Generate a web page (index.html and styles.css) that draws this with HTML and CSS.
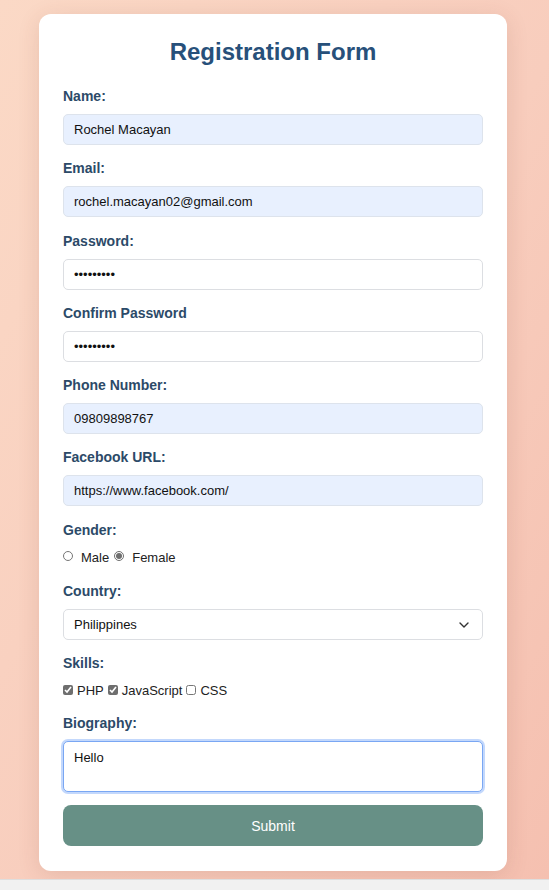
FILE: index.html
```html
<!DOCTYPE html>
<html lang="en">
<head>
<meta charset="utf-8">
<title>Registration Form</title>
<link rel="stylesheet" href="styles.css">
</head>
<body>
<form class="card">
  <h2 class="title">Registration Form</h2>

  <label class="lbl" for="name">Name:</label>
  <input class="field filled" id="name" type="text" value="Rochel Macayan">

  <label class="lbl" for="email">Email:</label>
  <input class="field filled" id="email" type="email" value="rochel.macayan02@gmail.com">

  <label class="lbl" for="pw">Password:</label>
  <input class="field" id="pw" type="password" value="123456789">

  <label class="lbl" for="pw2">Confirm Password</label>
  <input class="field" id="pw2" type="password" value="123456789">

  <label class="lbl" for="phone">Phone Number:</label>
  <input class="field filled" id="phone" type="text" value="09809898767">

  <label class="lbl" for="fb">Facebook URL:</label>
  <input class="field filled" id="fb" type="text" value="https://www.facebook.com/">

  <label class="lbl">Gender:</label>
  <div class="choices gender">
    <input class="radio" type="radio" name="g" id="male"><label class="opt" for="male">Male</label>
    <input class="radio" type="radio" name="g" id="female" checked><label class="opt" for="female">Female</label>
  </div>

  <label class="lbl" for="country">Country:</label>
  <div class="select-wrap">
    <select class="field select" id="country">
      <option>Philippines</option>
    </select>
    <svg class="chev" width="10" height="6" viewBox="0 0 10 6"><path d="M1 1 L5 5 L9 1" fill="none" stroke="#333" stroke-width="1.4" stroke-linecap="round" stroke-linejoin="round"/></svg>
  </div>

  <label class="lbl">Skills:</label>
  <div class="choices skills">
    <input class="check" type="checkbox" id="php" checked><label class="opt" for="php">PHP</label>
    <input class="check" type="checkbox" id="js" checked><label class="opt" for="js">JavaScript</label>
    <input class="check" type="checkbox" id="css"><label class="opt" for="css">CSS</label>
  </div>

  <label class="lbl" for="bio">Biography:</label>
  <textarea class="field bio" id="bio">Hello</textarea>

  <button class="submit" type="button">Submit</button>
</form>
</body>
</html>
```

FILE: styles.css
```css
html {
  background: #f1f1f1;
  margin: 0;
  height: 100%;
}

body {
  margin: 0;
  padding: 14px 3px 8px 0;
  background: linear-gradient(120deg, #fbd9c6 0%, #f8cdbd 55%, #f5c0b0 100%);
  border-bottom: 1px solid #dedede;
  display: flex;
  justify-content: center;
  font-family: "Liberation Sans", Arial, sans-serif;
}

.card {
  width: 468px;
  box-sizing: border-box;
  background: #fff;
  border-radius: 12px;
  padding: 24px 24px 25px;
  display: flex;
  flex-direction: column;
  box-shadow: 0 4px 22px rgba(120, 60, 40, 0.14);
}

.title {
  margin: 0 0 22px;
  font-size: 24px;
  line-height: 28px;
  text-align: center;
  color: #27507a;
  font-weight: bold;
}

.lbl {
  font-size: 14px;
  line-height: 16px;
  font-weight: bold;
  color: #2c4a68;
  margin-bottom: 10px;
}

.field {
  box-sizing: border-box;
  width: 100%;
  height: 31px;
  margin: 0 0 15.3px;
  padding: 0 10px;
  border: 1px solid #dcdee2;
  border-radius: 5px;
  background: #fff;
  font-family: "Liberation Sans", Arial, sans-serif;
  font-size: 13px;
  color: #111;
  outline: none;
}

.field.filled {
  background: #e8f0fe;
  border-color: #dde3ec;
}

.choices {
  display: flex;
  align-items: center;
  height: 17px;
  font-size: 13px;
  color: #222;
}

.gender {
  margin-bottom: 18px;
}

.skills {
  margin-bottom: 17px;
}

.radio {
  width: 10px;
  height: 10px;
  margin: 0 8px 0 0;
  accent-color: #6e6e6e;
}

.gender .opt {
  margin-right: 5px;
  position: relative;
  top: 1px;
}

.check {
  width: 10px;
  height: 10px;
  margin: 0 4px 0 0;
  accent-color: #6e6e6e;
}

.skills .opt {
  margin-right: 4px;
  position: relative;
  top: 1px;
}

.select-wrap {
  position: relative;
}

.select {
  appearance: none;
  -webkit-appearance: none;
}

.chev {
  position: absolute;
  right: 14px;
  top: 13px;
  pointer-events: none;
}

.bio {
  height: 51px;
  padding: 8px 10px;
  resize: none;
  line-height: 16px;
  border: 1px solid #7aa7f3;
  box-shadow: 0 0 0 2px #c3d8fc;
  margin-bottom: 13px;
}

.submit {
  height: 41px;
  width: 100%;
  border: none;
  border-radius: 8px;
  background: #679086;
  color: #fff;
  font-family: "Liberation Sans", Arial, sans-serif;
  font-size: 14px;
  cursor: pointer;
}
```
